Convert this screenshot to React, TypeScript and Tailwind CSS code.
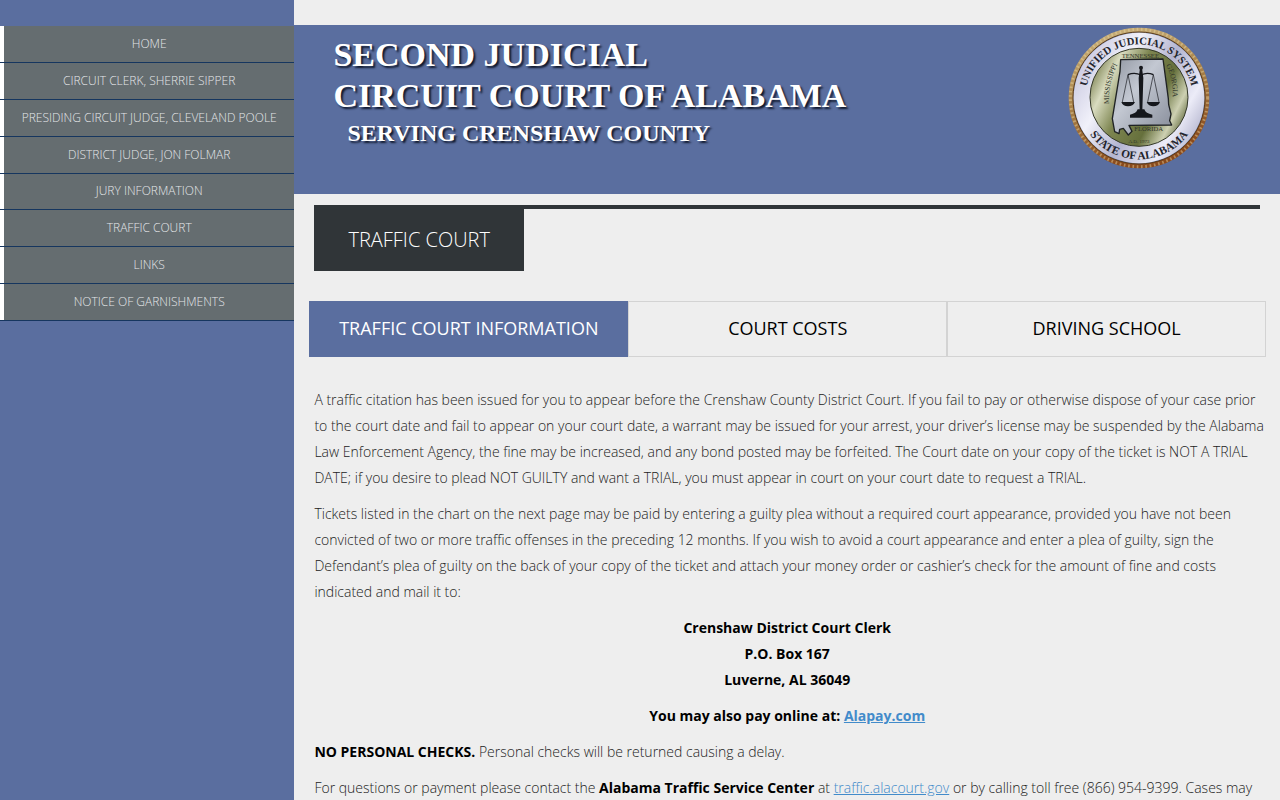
const navItems = [
  "Home",
  "Circuit Clerk, Sherrie Sipper",
  "Presiding Circuit Judge, Cleveland Poole",
  "District Judge, Jon Folmar",
  "Jury Information",
  "Traffic Court",
  "Links",
  "Notice of Garnishments",
];

const tabs = ["Traffic Court Information", "Court Costs", "Driving School"];

function Seal() {
  return (
    <svg viewBox="55 37 426 426" className="w-[142px] h-[142px] shrink-0" role="img" aria-label="Unified Judicial System, State of Alabama">
      <defs>
        <linearGradient id="rope" x1="0" y1="0" x2="0.3" y2="1">
          <stop offset="0" stopColor="#cdb681" />
          <stop offset="0.5" stopColor="#a9834b" />
          <stop offset="1" stopColor="#8a4a1c" />
        </linearGradient>
        <linearGradient id="band" x1="0" y1="0.2" x2="1" y2="0.8">
          <stop offset="0" stopColor="#c3c3dc" />
          <stop offset="0.3" stopColor="#f1f1fa" />
          <stop offset="0.55" stopColor="#b4b5d0" />
          <stop offset="0.8" stopColor="#ececf8" />
          <stop offset="1" stopColor="#a9aac6" />
        </linearGradient>
        <linearGradient id="field" x1="0" y1="0.2" x2="1" y2="0.7">
          <stop offset="0" stopColor="#6d7340" />
          <stop offset="0.2" stopColor="#d9dcc0" />
          <stop offset="0.42" stopColor="#7d8550" />
          <stop offset="0.7" stopColor="#66703c" />
          <stop offset="0.88" stopColor="#cdd0b2" />
          <stop offset="1" stopColor="#687045" />
        </linearGradient>
        <linearGradient id="state" x1="0" y1="0" x2="1" y2="1">
          <stop offset="0" stopColor="#8f95a0" />
          <stop offset="0.4" stopColor="#c3c8d2" />
          <stop offset="1" stopColor="#858b98" />
        </linearGradient>
        <path id="arcTop" d="M 107 250 A 161 161 0 0 1 429 250" />
        <path id="arcBottom" d="M 84 250 A 184 184 0 0 0 452 250" />
        <path id="arcLeft" d="M 179 276 Q 172 210 207 142" />
        <path id="arcRight" d="M 347 148 Q 372 190 369 252" />
      </defs>
      <circle cx="268" cy="250" r="204" fill="none" stroke="url(#rope)" strokeWidth="14" />
      <circle cx="268" cy="250" r="206" fill="none" stroke="#ead9a6" strokeWidth="9" strokeDasharray="5 8" opacity="0.45" />
      <circle cx="268" cy="250" r="198" fill="none" stroke="#5b3d1d" strokeWidth="3" />
      <circle cx="268" cy="250" r="196" fill="url(#band)" />
      <circle cx="268" cy="248" r="147" fill="url(#field)" stroke="#35392a" strokeWidth="3" />
      <g fill="#23242c" fontFamily="Liberation Serif, serif" fontWeight="700">
        <text fontSize="32" textAnchor="middle">
          <textPath href="#arcTop" startOffset="50%">UNIFIED JUDICIAL SYSTEM</textPath>
        </text>
        <text fontSize="34" textAnchor="middle">
          <textPath href="#arcBottom" startOffset="50%">STATE OF ALABAMA</textPath>
        </text>
      </g>
      <path d="M213 135 L340 133 L356 252 L357 270 L364 298 L360 318 L366 331 L238 332 L247 350 L236 361 L221 341 L210 344 L208 357 L195 351 L188 312 L211 170 Z" fill="url(#state)" stroke="#1f2224" strokeWidth="4" strokeLinejoin="round" />
      <g fill="#30342a" fontFamily="Liberation Serif, serif">
        <text x="272" y="130" fontSize="20" textAnchor="middle">TENNESSEE</text>
        <text fontSize="22" textAnchor="middle">
          <textPath href="#arcLeft" startOffset="50%">MISSISSIPPI</textPath>
        </text>
        <text fontSize="22" textAnchor="middle">
          <textPath href="#arcRight" startOffset="50%">GEORGIA</textPath>
        </text>
        <text x="297" y="349" fontSize="20" textAnchor="middle">FLORIDA</text>
        <text x="268" y="384" fontSize="15" textAnchor="middle">A.D. 1973</text>
      </g>
      {/* Scales of justice */}
      <g stroke="#15171c" fill="#15171c">
        <path d="M235 180 Q255 172 274 181 Q292 172 311 180" fill="none" strokeWidth="4" />
        <path d="M235 180 L218 262 M235 180 L252 262 M311 180 L294 262 M311 180 L328 262" fill="none" strokeWidth="2" />
        <path d="M215 262 H256 Q250 275 235 275 Q220 275 215 262 Z M291 262 H331 Q326 275 311 275 Q297 275 291 262 Z" stroke="none" />
        <circle cx="274" cy="159" r="6" stroke="none" />
        <path d="M271 160 H277 L281 190 L278 286 H270 L267 190 Z M264 284 H284 Q288 297 308 300 V309 H241 V300 Q260 297 264 284 Z" stroke="none" />
      </g>
    </svg>
  );
}

export default function App() {
  return (
    <div className="min-h-screen flex bg-[#eeeeee] font-['Open_Sans',sans-serif] font-light">
      {/* Sidebar */}
      <aside className="w-[23%] shrink-0 bg-[#5a6e9f] pt-[26px]">
        <nav aria-label="Main">
          <ul className="grid auto-rows-fr h-[295px]">
            {navItems.map((item) => (
              <li key={item} className="flex border-b border-[#16365f]">
                <a href="#" className="flex flex-1 items-center justify-center border-l-4 border-white bg-[#656d70] text-xs uppercase text-[#e4e6e8] whitespace-nowrap">
                  {item}
                </a>
              </li>
            ))}
          </ul>
        </nav>
      </aside>

      <div className="flex-1 min-w-0 pt-[25px]">
        <header className="flex justify-between h-[169px] bg-[#5a6e9f] pl-[39px] pr-[70px] pt-[2px]">
          <div className="pt-[7px] font-['Liberation_Serif',serif] font-bold text-white uppercase whitespace-nowrap [text-shadow:2px_2px_2px_#10182c]">
            <h1 className="text-[34px] leading-[41px]">
              Second Judicial
              <br />
              Circuit Court of Alabama
            </h1>
            <p className="pl-[14px] text-2xl leading-[34px]">Serving Crenshaw County</p>
          </div>
          <Seal />
        </header>

        <main className="px-5 pt-[11px]">
          <div className="border-t-4 border-[#303538]">
            <h2 className="inline-block align-top bg-[#303538] px-[34px] text-xl leading-[62px] uppercase text-white">Traffic Court</h2>
          </div>

          <div role="tablist" className="flex mt-[30px] -ml-[5px] -mr-[6px]">
            {tabs.map((tab, i) => (
              <button
                key={tab}
                type="button"
                role="tab"
                aria-selected={i === 0}
                className={`flex-1 h-14 border pb-[2px] text-lg font-normal uppercase ${
                  i === 0 ? "border-[#5a6e9f] bg-[#5a6e9f] text-white" : "border-[#d3d3d3] text-black"
                }`}
              >
                {tab}
              </button>
            ))}
          </div>

          <div className="mt-[30px] -mr-2 flex flex-col gap-[10px] text-sm leading-[26px] text-[#222222]">
            <p>
              A traffic citation has been issued for you to appear before the Crenshaw County District Court. If you fail to pay or otherwise dispose of your case prior to the court date and fail to appear on your court date, a warrant may be issued for your arrest, your driver’s license may be suspended by the Alabama Law Enforcement Agency, the fine may be increased, and any bond posted may be forfeited. The Court date on your copy of the ticket is NOT A TRIAL DATE; if you desire to plead NOT GUILTY and want a TRIAL, you must appear in court on your court date to request a TRIAL.
            </p>
            <p>
              Tickets listed in the chart on the next page may be paid by entering a guilty plea without a required court appearance, provided you have not been convicted of two or more traffic offenses in the preceding 12 months. If you wish to avoid a court appearance and enter a plea of guilty, sign the Defendant’s plea of guilty on the back of your copy of the ticket and attach your money order or cashier’s check for the amount of fine and costs indicated and mail it to:
            </p>
            <p className="pr-2 text-center font-bold text-black">
              Crenshaw District Court Clerk
              <br />
              P.O. Box 167
              <br />
              Luverne, AL 36049
            </p>
            <p className="pr-2 text-center font-bold text-black">
              You may also pay online at: <a href="#" className="text-[#428bca] underline">Alapay.com</a>
            </p>
            <p>
              <strong className="font-bold text-black">NO PERSONAL CHECKS.</strong> Personal checks will be returned causing a delay.
            </p>
            <p>
              For questions or payment please contact the <strong className="font-bold text-black">Alabama Traffic Service Center</strong> at{" "}
              <a href="#" className="text-[#428bca] underline">traffic.alacourt.gov</a> or by calling toll free (866) 954-9399. Cases may
            </p>
          </div>
        </main>
      </div>
    </div>
  );
}
